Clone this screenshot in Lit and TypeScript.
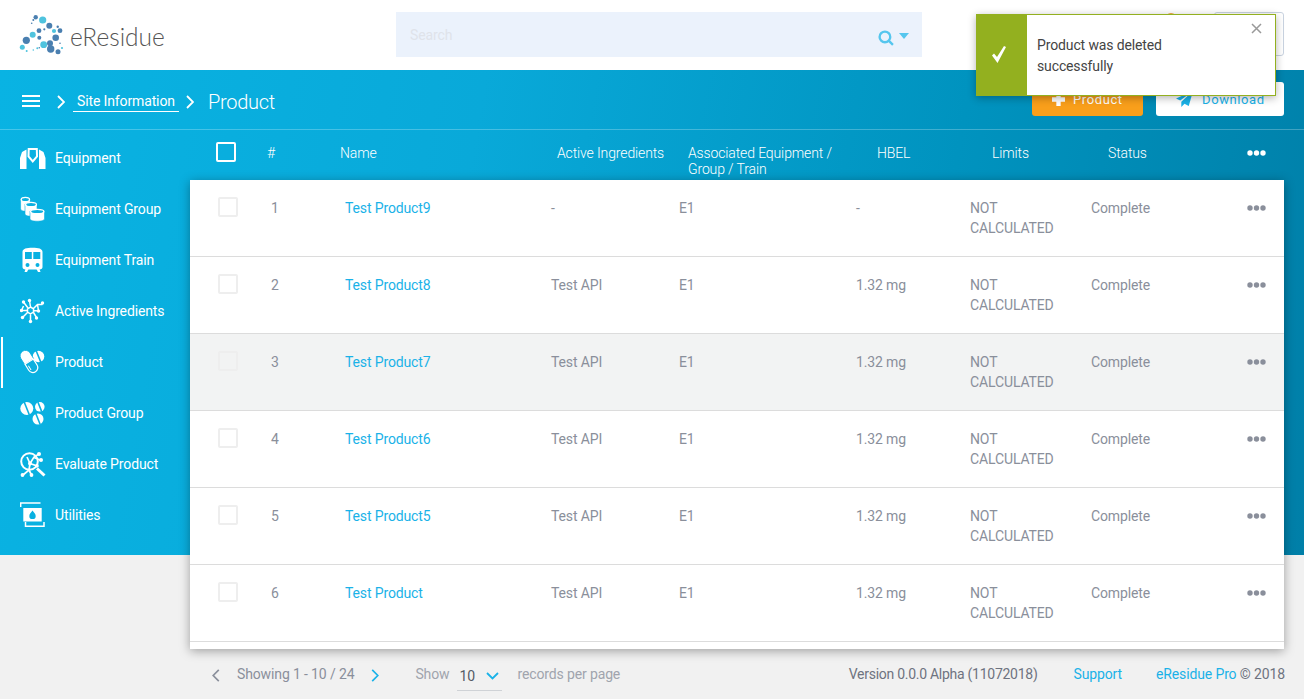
import { LitElement, html, css, svg } from 'lit';
import { customElement } from 'lit/decorators.js';
import { classMap } from 'lit/directives/class-map.js';

const dk = '#4a7fb0';
const lt = '#4fc3de';
const blue = '#0bb0e0';
// x, y, r, colour of the logo dots
const logoDots: [number, number, number, string][] = [
  [42.7, 20, 3.6, lt], [35.7, 17.3, 2.2, dk], [49.3, 25.7, 3, dk], [60, 30.7, 2.4, dk],
  [54, 31, 2.1, lt], [39, 30.7, 2.4, dk], [32.7, 34.7, 3, lt], [55.7, 37.7, 3.3, dk],
  [39.3, 37.7, 2, dk], [26.3, 40.3, 3.6, dk], [43.7, 44.7, 3.4, lt], [50, 43.3, 3, dk],
  [50.7, 49, 3.7, dk], [22.3, 47.3, 2.5, lt], [58, 51.7, 2.5, dk], [62, 48, 1.1, lt],
  [57.7, 26.7, 1.2, dk], [33.3, 20, 1, dk], [31.7, 23.3, 0.8, dk], [44.3, 29.3, 1.1, dk],
  [26.7, 51, 1, lt], [37.3, 48.3, 1, lt], [33.3, 50, 0.8, lt], [39.3, 47.7, 0.8, dk], [60, 43.3, 0.8, dk],
];

const cylinder = (x: number, y: number, w: number, h: number) => svg`
  <path d="M${x} ${y + 2}v${h}c0 3 ${w} 3 ${w} 0v-${h}z" fill="#fff" stroke=${blue} stroke-width="0.600" />
  <ellipse cx=${x + w / 2} cy=${y + 2.5} rx=${w / 2 - 0.6} ry="2.200" fill=${blue} stroke="#fff" stroke-width="1.300" />`;

const tablet = (cx: number, cy: number, r: number) => svg`
  <circle cx=${cx} cy=${cy} r=${r} fill="#fff" />
  <path d="M${cx - r * 0.4} ${cy - r}L${cx + r * 0.4} ${cy + r}" stroke=${blue} stroke-width="1.600" />`;

const icons: Record<string, unknown> = {
  equipment: svg`<path d="M0 13 2 7l4.500-2.500V24H0zM25.500 13l-2-6L19 4.500V24h6.500z"/><path fill="none" stroke="#fff" stroke-width="2" d="M8.700 4h8.100l.2 7.500-4.250 5-4.250-5z"/>`,
  group: svg`${cylinder(0.6, 1, 9.5, 10)}${cylinder(5, 6, 12, 10)}${cylinder(10, 13, 14.500, 8)}`,
  train: svg`<path fill-rule="evenodd" d="M2.500 5c0-3.500 4-4.300 10-4.300s10 .8 10 4.300v15c0 1.500-1 2.500-3 2.500h-14c-2 0-3-1-3-2.500zm2.500 0v7h6.800V5zm8.300 0v7h7V5zM7.500 16a2 2 0 1 0 0 4 2 2 0 0 0 0-4zm10 0a2 2 0 1 0 0 4 2 2 0 0 0 0-4z"/><path d="M5.500 22h3l-1.500 3H4.500zM16.500 22h3l1 3H18z"/>`,
  active: svg`<g stroke="#fff" stroke-width="1.500" fill="none"><path d="m10.500 9 3 1.800v3.400l-3 1.800-3-1.800v-3.400zM8 10 3.500 4M10.500 9l-1-6.500M13.500 10.500l4-4h5M13.500 12.500l5 .5M13.500 14.500l3 5M10.500 16v7.500M7.500 14.500l-5 5M7.500 12.500H1.500M3.500 8l-2 4.500M17.500 6.500l1 6.500"/></g><circle cx="3.500" cy="4" r="1.700"/><circle cx="9.500" cy="2.500" r="1.700"/><circle cx="22.500" cy="5" r="1.700"/><circle cx="18.500" cy="13" r="1.700"/><circle cx="16.500" cy="20" r="1.700"/><circle cx="10.500" cy="23.500" r="1.700"/><circle cx="2.500" cy="19.500" r="1.700"/><circle cx="1.500" cy="12.500" r="1.700"/>`,
  product: svg`${tablet(18.500, 7.500, 5.800)}
    <g transform="translate(9.200 12.700) rotate(58)">
      <path d="M0-5.400H-7a5.400 5.400 0 0 0 0 10.800H0z" fill="#fff" stroke=${blue} stroke-width="0.800"/>
      <path d="M0-4.900H7a4.900 4.900 0 0 1 0 9.800H0z" fill=${blue} stroke="#fff" stroke-width="1.200"/>
      <path d="M3 2.800H8" stroke="#fff" stroke-width="1" fill="none"/>
    </g>`,
  pgroup: svg`${tablet(6.800, 8.500, 6.500)}${tablet(19.800, 6.800, 4.800)}${tablet(18, 19, 5.500)}`,
  evaluate: svg`<circle cx="9.500" cy="10.500" r="8.300" fill="none" stroke="#fff" stroke-width="2"/><path d="M17 17.500l7.500 7" stroke="#fff" stroke-width="3"/><g stroke="#fff" stroke-width="1.700" fill="none"><path d="M7 6l3 6.500 4-6.500 5-3M14 6.500l6 2.500M10 12.500 9 19 3 24M9 19l2.500 5M10 12.500l6 2 2-1"/></g><circle cx="19" cy="3" r="2"/><circle cx="21" cy="9" r="2"/><circle cx="17" cy="15" r="1.800"/><circle cx="10" cy="12.500" r="2"/><circle cx="2.500" cy="24" r="1.900"/><circle cx="11.500" cy="24" r="1.900"/>`,
  utilities: svg`<path fill="none" stroke="#fff" stroke-width="1.500" d="M.7 5V1h19.800M5.500 20v4.200h18.500V20"/><path fill-rule="evenodd" d="M3.300 6h18.400v13.500H3.300zM12.500 8.500c-1.500 2-3.200 3.400-3.200 5.400a3.200 3.200 0 0 0 6.400 0c0-2-1.700-3.400-3.200-5.400z"/>`,
};

const navItems = [
  { icon: 'equipment', label: 'Equipment' },
  { icon: 'group', label: 'Equipment Group' },
  { icon: 'train', label: 'Equipment Train' },
  { icon: 'active', label: 'Active Ingredients' },
  { icon: 'product', label: 'Product', active: true },
  { icon: 'pgroup', label: 'Product Group' },
  { icon: 'evaluate', label: 'Evaluate Product' },
  { icon: 'utilities', label: 'Utilities' },
];

const rows = [
  { n: 1, name: 'Test Product9', api: '-', hbel: '-' },
  { n: 2, name: 'Test Product8', api: 'Test API', hbel: '1.32 mg' },
  { n: 3, name: 'Test Product7', api: 'Test API', hbel: '1.32 mg', hover: true },
  { n: 4, name: 'Test Product6', api: 'Test API', hbel: '1.32 mg' },
  { n: 5, name: 'Test Product5', api: 'Test API', hbel: '1.32 mg' },
  { n: 6, name: 'Test Product', api: 'Test API', hbel: '1.32 mg' },
];

const dots = html`<svg width="19" height="6" viewBox="0 0 19 6" fill="currentColor"><circle cx="3" cy="3" r="2.700"/><circle cx="9.500" cy="3" r="2.700"/><circle cx="16" cy="3" r="2.700"/></svg>`;
const chevron = (d: string, w = 8, h = 14) => html`<svg width=${w} height=${h} viewBox="0 0 8 14" fill="none" stroke="currentColor" stroke-width="1.800"><path d=${d}/></svg>`;

@customElement('app-root')
export class AppRoot extends LitElement {
  static styles = css`
    :host {
      display: block;
      position: relative;
      height: 699px;
      overflow: hidden;
      background: #f1f1f1;
      font-family: Roboto, sans-serif;
      font-size: 14px;
      letter-spacing: -0.13px;
      color: #8a8f9b;
    }
    .topbar {
      height: 70px;
      background: #fff;
      display: flex;
      align-items: flex-start;
    }
    .logo {
      display: flex;
      width: 396px;
      height: 70px;
    }
    .logo svg { margin-left: 19px; margin-top: 13px; }
    .logo span {
      font-family: Lato, sans-serif;
      font-weight: 300;
      font-size: 24.5px;
      letter-spacing: 0;
      color: #555;
      margin-left: 5px;
      margin-top: 21px;
      line-height: 32px;
    }
    .search {
      width: 526px;
      height: 45px;
      margin-top: 12px;
      background: #ebf2fc;
      display: flex;
      align-items: center;
      box-sizing: border-box;
      padding: 0 13px 0 14px;
      color: #dfe3ea;
    }
    .search span { flex: 1; }
    .search svg { margin-left: 5px; margin-top: 6px; }
    .account {
      margin-left: auto;
      margin-right: 20px;
      margin-top: 12px;
      width: 70px;
      height: 44px;
      box-sizing: border-box;
      border: 1px solid #c9d3e0;
      border-radius: 3px;
    }
    .page {
      height: 629px;
      background: linear-gradient(100deg, #09b3e3 0%, #09a9d9 35%, #0093bf 70%, #007fa8 100%) top / 100% 485px no-repeat;
    }
    .toolbar {
      height: 59px;
      border-bottom: 1px solid rgba(255, 255, 255, 0.25);
      display: flex;
      align-items: center;
      padding: 0 20px 0 22px;
      color: #fff;
    }
    .burger { width: 18px; border-top: 2px solid #fff; border-bottom: 2px solid #fff; position: relative; height: 8px; margin-top: 3px; }
    .burger::after { content: ''; position: absolute; left: 0; right: 0; top: 3px; height: 2px; background: #fff; }
    .crumb-chev { display: flex; margin-left: 17px; margin-top: 4px; }
    .crumb {
      margin-left: 8px;
      margin-top: 4px;
      padding: 0 4px 1px;
      border-bottom: 1px solid #fff;
      line-height: 18px;
      width: 98px;
      white-space: nowrap;
    }
    .crumb-chev.second { margin-left: 7px; }
    h1 {
      margin: 4px 0 0 14px;
      font-weight: 300;
      font-size: 20px;
      letter-spacing: -0.3px;
      line-height: 24px;
    }
    .actions { margin-left: auto; display: flex; gap: 13px; }
    .btn {
      height: 34px;
      margin-top: -1px;
      box-sizing: border-box;
      border-radius: 3px;
      display: flex;
      align-items: center;
      font-size: 13px;
      letter-spacing: 0.6px;
      padding-left: 20px;
    }
    .btn.add { width: 111px; background: #f99f1b; color: #fff; gap: 8px; }
    .btn.dl { width: 128px; background: #fff; color: #1ab2e8; gap: 9px; }
    .body { display: flex; }
    nav { width: 190px; flex: none; padding-top: 3px; color: #fff; }
    .nav-item {
      height: 51px;
      display: flex;
      align-items: center;
      padding-left: 20px;
      box-sizing: border-box;
      position: relative;
    }
    .nav-item svg { width: 26px; height: 26px; margin-right: 9px; flex: none; margin-top: -2px; }
    .nav-item span { margin-top: -1px; white-space: nowrap; }
    .nav-item.active::before {
      content: '';
      position: absolute;
      left: 1px;
      top: 0;
      bottom: 0;
      width: 2px;
      background: #fff;
    }
    .content { width: 1094px; flex: none; }
    .thead, .row { display: grid; }
    .thead {
      height: 50px;
      box-sizing: border-box;
      padding: 15px 0 0 26px;
      grid-template-columns: 51px 73px 217px 131px 189px 115px 116px 139px 37px;
      color: #fff;
      font-weight: 300;
      line-height: 16px;
    }
    .thead .box { width: 20px; height: 20px; margin-top: -3px; border-color: #fff; }
    .thead svg { margin-top: 5px; color: #fff; }
    .table {
      height: 469px;
      background: #fff;
      box-shadow: 0 2px 10px rgba(0, 0, 0, 0.35);
      overflow: hidden;
    }
    .row {
      height: 77px;
      box-sizing: border-box;
      border-bottom: 1px solid #dcdcdc;
      padding: 18px 0 0 28px;
      grid-template-columns: 53px 74px 206px 128px 177px 114px 121px 156px 37px;
      line-height: 20px;
    }
    .row.hover { background: #f2f3f3; }
    .box {
      box-sizing: border-box;
      width: 20px;
      height: 20px;
      border: 2px solid #eeeeee;
      border-radius: 2px;
      margin-top: -1px;
    }
    .row a { color: #1ab2e8; text-decoration: none; }
    .row svg { margin-top: 7px; color: #8a8f9b; }
    footer {
      display: flex;
      align-items: center;
      height: 50px;
      padding: 0 0 0 22px;
      white-space: nowrap;
    }
    .pager { display: flex; margin-top: 2px; }
    .showing { margin-left: 17px; }
    .next { display: flex; color: #1ab2e8; margin-left: 17px; margin-top: 2px; }
    .show { margin-left: 36px; color: #a0a4ad; }
    .select {
      margin-left: 8px;
      width: 45px;
      height: 32px;
      box-sizing: border-box;
      border-bottom: 1px solid #cfd2d6;
      display: flex;
      align-items: center;
      padding: 2px 0 0 2px;
      color: #555b66;
      margin-top: 2px;
    }
    .select svg { margin-left: 11px; color: #1ab2e8; }
    .records { margin-left: 15px; color: #a0a4ad; }
    .version { margin-left: auto; color: #6e7380; letter-spacing: -0.27px; }
    .support { margin-left: 36px; color: #1ab2e8; }
    .brand { margin-left: 34px; margin-right: -1px; color: #6e7380; }
    .brand span { color: #1ab2e8; }
    .toast {
      position: absolute;
      left: 976px;
      top: 14px;
      width: 300px;
      height: 82px;
      box-sizing: border-box;
      border: 1px solid #93b01f;
      background: #fff;
      display: flex;
      box-shadow: 0 2px 8px rgba(0, 0, 0, 0.3);
      color: #444;
      line-height: 21px;
    }
    .toast .flag {
      width: 50px;
      background: #93b01f;
      display: flex;
      align-items: center;
      justify-content: center;
      flex: none;
      padding: 0 6px 2px 0;
      box-sizing: border-box;
    }
    .toast p { margin: 20px 0 0 10px; width: 150px; }
    .toast .close { position: absolute; right: 13px; top: 8px; color: #999; display: flex; }
    .avatar {
      position: absolute;
      left: 1165px;
      top: 13px;
      width: 12px;
      height: 12px;
      border-radius: 50%;
      background: #f0a840;
    }
  `;

  render() {
    return html`
      <div class="topbar">
        <div class="logo">
          <svg width="46" height="44" viewBox="19 13 46 44">
            ${logoDots.map(([x, y, r, c]) => svg`<circle cx=${x} cy=${y} r=${r} fill=${c} />`)}
          </svg>
          <span>eResidue</span>
        </div>
        <div class="search">
          <span>Search</span>
          <svg width="16" height="16" viewBox="0 0 15 15" fill="none" stroke="#55c6ee" stroke-width="2.200"><circle cx="6.500" cy="6.500" r="5"/><path d="m10 10 4 4"/></svg>
          <svg width="10" height="6" viewBox="0 0 10 6" fill="#55c6ee" style="margin-top:3px"><path d="M0 0h10L5 6z"/></svg>
        </div>
        <div class="account"></div>
      </div>
      <div class="page">
        <div class="toolbar">
          <div class="burger"></div>
          <span class="crumb-chev">${chevron('M1 1l6 6-6 6')}</span>
          <span class="crumb">Site Information</span>
          <span class="crumb-chev second">${chevron('M1 1l6 6-6 6')}</span>
          <h1>Product</h1>
          <div class="actions">
            <div class="btn add">
              <svg width="13" height="13" viewBox="0 0 12 12" fill="#fff"><path d="M4 0h4v4h4v4H8v4H4V8H0V4h4z"/></svg>
              Product
            </div>
            <div class="btn dl">
              <svg width="17" height="16" viewBox="0 0 16 15" fill="#1ab2e8"><path d="M16 0 0 7l4 2zM16 0 5 10v5l3-3 4 2z"/></svg>
              Download
            </div>
          </div>
        </div>
        <div class="body">
          <nav>
            ${navItems.map(
              (n) => html`<div class=${classMap({ 'nav-item': true, active: !!n.active })}>
                <svg viewBox="0 0 26 26" fill="#fff">${icons[n.icon]}</svg>
                <span>${n.label}</span>
              </div>`
            )}
          </nav>
          <div class="content">
            <div class="thead">
              <div class="box"></div>
              <div>#</div>
              <div>Name</div>
              <div>Active Ingredients</div>
              <div>Associated Equipment /<br />Group / Train</div>
              <div>HBEL</div>
              <div>Limits</div>
              <div>Status</div>
              ${dots}
            </div>
            <div class="table">
              ${rows.map(
                (r) => html`<div class=${classMap({ row: true, hover: !!r.hover })}>
                  <div class="box"></div>
                  <div>${r.n}</div>
                  <a>${r.name}</a>
                  <div>${r.api}</div>
                  <div>E1</div>
                  <div>${r.hbel}</div>
                  <div>NOT<br />CALCULATED</div>
                  <div>Complete</div>
                  ${dots}
                </div>`
              )}
            </div>
            <footer>
              <span class="pager">${chevron('M7 1 1 7l6 6', 8, 13)}</span>
              <span class="showing">Showing 1 - 10 / 24</span>
              <span class="next">${chevron('M1 1l6 6-6 6', 8, 13)}</span>
              <span class="show">Show</span>
              <div class="select">10
                <svg width="13" height="8" viewBox="0 0 13 8" fill="none" stroke="currentColor" stroke-width="1.800"><path d="m1 1 5.500 5.500L12 1"/></svg>
              </div>
              <span class="records">records per page</span>
              <span class="version">Version 0.0.0 Alpha (11072018)</span>
              <span class="support">Support</span>
              <span class="brand"><span>eResidue Pro</span> © 2018</span>
            </footer>
          </div>
        </div>
      </div>
      <div class="avatar"></div>
      <div class="toast">
        <div class="flag">
          <svg width="14" height="17" viewBox="0 0 14 17" fill="#fff"><path d="M0 9.500 2 7.500l3 3.500L12 0l2 1L5.500 17z"/></svg>
        </div>
        <p>Product was deleted successfully</p>
        <span class="close"><svg width="11" height="11" viewBox="0 0 11 11" stroke="currentColor" stroke-width="1.500"><path d="m1 1 9 9M10 1l-9 9"/></svg></span>
      </div>
    `;
  }
}
